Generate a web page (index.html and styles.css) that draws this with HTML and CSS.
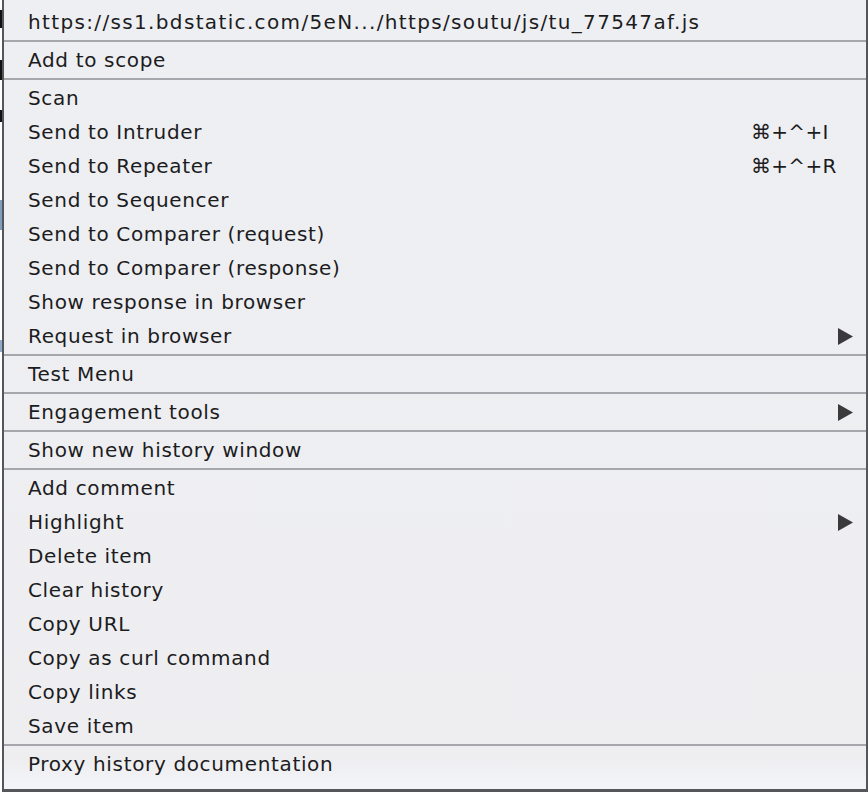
FILE: index.html
```html
<!DOCTYPE html>
<html>
<head>
<meta charset="utf-8">
<link rel="stylesheet" href="styles.css">
</head>
<body>
<div class="page">
  <div class="edge"></div>
  <div class="menu">
    <div class="item"><span class="label url">https://ss1.bdstatic.com/5eN.../https/soutu/js/tu_77547af.js</span></div>
    <div class="sep"></div>
    <div class="item"><span class="label">Add to scope</span></div>
    <div class="sep"></div>
    <div class="item"><span class="label">Scan</span></div>
    <div class="item"><span class="label">Send to Intruder</span><span class="key">⌘+^+I</span></div>
    <div class="item"><span class="label">Send to Repeater</span><span class="key">⌘+^+R</span></div>
    <div class="item"><span class="label">Send to Sequencer</span></div>
    <div class="item"><span class="label">Send to Comparer (request)</span></div>
    <div class="item"><span class="label">Send to Comparer (response)</span></div>
    <div class="item"><span class="label">Show response in browser</span></div>
    <div class="item"><span class="label">Request in browser</span><span class="key"></span><svg class="arrow" viewBox="0 0 15 17" width="15" height="17"><polygon points="0,0 15,8.5 0,17" fill="#3a3a3c"/></svg></div>
    <div class="sep"></div>
    <div class="item"><span class="label">Test Menu</span></div>
    <div class="sep"></div>
    <div class="item"><span class="label">Engagement tools</span><span class="key"></span><svg class="arrow" viewBox="0 0 15 17" width="15" height="17"><polygon points="0,0 15,8.5 0,17" fill="#3a3a3c"/></svg></div>
    <div class="sep"></div>
    <div class="item"><span class="label">Show new history window</span></div>
    <div class="sep"></div>
    <div class="item"><span class="label">Add comment</span></div>
    <div class="item"><span class="label">Highlight</span><span class="key"></span><svg class="arrow" viewBox="0 0 15 17" width="15" height="17"><polygon points="0,0 15,8.5 0,17" fill="#3a3a3c"/></svg></div>
    <div class="item"><span class="label">Delete item</span></div>
    <div class="item"><span class="label">Clear history</span></div>
    <div class="item"><span class="label">Copy URL</span></div>
    <div class="item"><span class="label">Copy as curl command</span></div>
    <div class="item"><span class="label">Copy links</span></div>
    <div class="item"><span class="label">Save item</span></div>
    <div class="sep"></div>
    <div class="item"><span class="label">Proxy history documentation</span></div>
  </div>
</div>
</body>
</html>
```
FILE: styles.css
```css
html, body {
  margin: 0;
  padding: 0;
  background: #ffffff;
}
.page {
  display: flex;
  width: 868px;
  height: 796px;
  overflow: hidden;
}
.edge {
  width: 2px;
  flex: none;
  height: 792px;
  background:
    linear-gradient(#ffffff 0 10px, #111 10px 28px, #ffffff 28px 60px, #111 60px 80px, #fff 80px 110px, #111 110px 122px, #fff 122px 200px, #7f9fc0 200px 230px, #fff 230px 340px, #90aacc 340px 352px, #fff 352px);
}
.menu {
  flex: none;
  width: 862px;
  height: 784px;
  border-left: 2px solid #555659;
  border-right: 2px solid #555659;
  border-bottom: 3px solid #555659;
  background: linear-gradient(#eeeff2 0, #eeeef1 760px, #f3f4f7 785px);
  padding-top: 5px;
  box-sizing: content-box;
  font-family: "DejaVu Sans", "Liberation Sans", sans-serif;
  font-size: 20px;
  color: #1c1c1e;
}
.item {
  display: grid;
  grid-template-columns: 1fr 86px 16px;
  align-items: center;
  height: 34px;
  padding: 0 13px 0 24px;
}
.label {
  white-space: nowrap;
  letter-spacing: 0.65px;
}
.label.url {
  letter-spacing: 1.35px;
}
.key {
  white-space: nowrap;
  letter-spacing: 0.3px;
}
.arrow {
  display: block;
  justify-self: end;
}
.sep {
  height: 4px;
  display: flex;
  align-items: center;
}
.sep::before {
  content: "";
  display: block;
  width: 100%;
  height: 2px;
  background: #a5a7ac;
}
```
